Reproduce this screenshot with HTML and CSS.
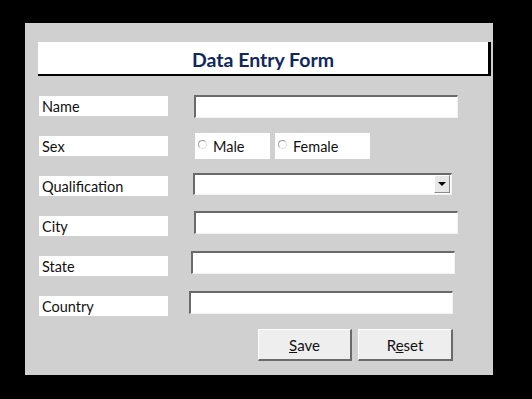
FILE: index.html
```html
<!DOCTYPE html>
<html lang="en">
<head>
  <meta charset="UTF-8">
  <meta name="viewport" content="width=device-width, initial-scale=1.0">
  <title>Data Entry Form</title>
  <link rel="stylesheet" href="styles.css">
</head>
<body>

  <div class="panel">
    <div class="title-bar">
      <h1>Data Entry Form</h1>
    </div>

    <div class="rows">
      <div class="row">
        <span class="label">Name</span>
        <input type="text" class="field">
      </div>

      <div class="row">
        <span class="label">Sex</span>
        <div class="radios">
          <label class="radio-box male"><span class="dot"></span>Male</label>
          <label class="radio-box female"><span class="dot"></span>Female</label>
        </div>
      </div>

      <div class="row">
        <span class="label">Qualification</span>
        <div class="combo">
          <span class="combo-btn"><span class="arrow"></span></span>
        </div>
      </div>

      <div class="row">
        <span class="label">City</span>
        <input type="text" class="field raised">
      </div>

      <div class="row">
        <span class="label">State</span>
        <input type="text" class="field raised shift-2">
      </div>

      <div class="row">
        <span class="label">Country</span>
        <input type="text" class="field raised shift-4">
      </div>
    </div>

    <div class="buttons">
      <button class="btn"><u>S</u>ave</button>
      <button class="btn">R<u>e</u>set</button>
    </div>
  </div>

</body>
</html>
```

FILE: styles.css
```css
* {
  margin: 0;
  padding: 0;
  box-sizing: border-box;
}

body {
  background-color: #000;
  font-family: Lato, "Open Sans", sans-serif;
  color: #111;
}

.panel {
  width: 468px;
  height: 352px;
  margin: 23px 0 0 25px;
  background-color: #d0d0d0;
  padding: 19px 0 0 13px;
}

.title-bar {
  width: 453px;
  height: 34px;
  background-color: #fff;
  border-right: 3px solid #000;
  border-bottom: 2px solid #000;
  display: flex;
  align-items: center;
  justify-content: center;
}

h1 {
  font-size: 19.5px;
  font-weight: bold;
  color: #10285e;
  padding-top: 2px;
}

.rows {
  display: flex;
  flex-direction: column;
  gap: 20px;
  margin-top: 20px;
}

.row {
  display: flex;
  align-items: flex-start;
  height: 20px;
}

.label {
  width: 129px;
  height: 20px;
  margin-left: 1px;
  background-color: #fff;
  font-size: 14.5px;
  line-height: 22px;
  padding-left: 3px;
}

.field {
  width: 264px;
  height: 23px;
  margin: -1px 0 0 26px;
  background-color: #fff;
  border-top: 2px solid #6a6a6a;
  border-left: 2px solid #6a6a6a;
  border-bottom: 1px solid #f2f2f2;
  border-right: 1px solid #f2f2f2;
  outline: none;
}

.raised {
  margin-top: -5px;
}

.shift-2 {
  margin-left: 23px;
}

.shift-4 {
  margin-left: 21px;
}

.radios {
  display: flex;
  gap: 5px;
  margin: -3px 0 0 27px;
}

.radio-box {
  height: 26px;
  background-color: #fff;
  display: flex;
  align-items: center;
  font-size: 14.5px;
  padding-left: 3px;
}

.male {
  width: 75px;
}

.female {
  width: 95px;
}

.dot {
  width: 9px;
  height: 9px;
  border-radius: 50%;
  border: 1px solid #9a9a9a;
  border-right-color: #e0e0e0;
  border-bottom-color: #e0e0e0;
  margin-right: 6px;
  margin-top: -4px;
}

.combo {
  width: 259px;
  height: 22px;
  margin: -3px 0 0 25px;
  background-color: #fff;
  border-top: 2px solid #6a6a6a;
  border-left: 2px solid #6a6a6a;
  border-bottom: 1px solid #f2f2f2;
  border-right: 1px solid #f2f2f2;
  display: flex;
  justify-content: flex-end;
  padding: 0 1px 1px 0;
}

.combo-btn {
  width: 16px;
  height: 18px;
  background-color: #e8e8e8;
  border-top: 1px solid #fff;
  border-left: 1px solid #fff;
  border-bottom: 1px solid #8a8a8a;
  border-right: 1px solid #8a8a8a;
  display: flex;
  align-items: center;
  justify-content: center;
}

.arrow {
  width: 0;
  height: 0;
  border-left: 4px solid transparent;
  border-right: 4px solid transparent;
  border-top: 4px solid #000;
}

.buttons {
  display: flex;
  gap: 6px;
  margin: 13px 0 0 220px;
}

.btn {
  height: 32px;
  width: 94px;
  background-color: #eeeeee;
  border-top: 1px solid #fff;
  border-left: 1px solid #fff;
  border-bottom: 2px solid #6a6a6a;
  border-right: 2px solid #6a6a6a;
  font-family: Lato, "Open Sans", sans-serif;
  font-size: 15px;
  color: #111;
}

.btn + .btn {
  width: 95px;
}
```
